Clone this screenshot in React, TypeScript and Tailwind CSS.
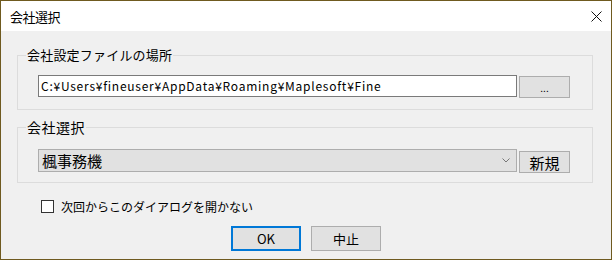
export default function App() {
  return (
    <div className="h-[261px] w-[613px] bg-white">
      <div className="flex h-[260px] w-[612px] flex-col border border-[#6f5a1f] bg-[#f0f0f0] font-['Noto_Sans_CJK_JP',sans-serif] text-black">
        {/* title bar */}
        <div className="flex h-[30px] shrink-0 items-center justify-between bg-white pl-[9px] pr-[9px]">
          <span className="text-[13px] leading-none tracking-[-0.5px]">会社選択</span>
          <svg width="11" height="11" viewBox="0 0 11 11">
            <path d="M0.5 0.5 L10.5 10.5 M10.5 0.5 L0.5 10.5" stroke="#111" strokeWidth="1" />
          </svg>
        </div>

        {/* file location */}
        <fieldset className="ml-4 mt-[15px] w-[576px] border border-[#dcdcdc] pb-[11px] pl-[20px] pt-[11px]">
          <legend className="-ml-[12px] px-[1px] text-[13px] leading-[18px] tracking-[0.2px]">
            会社設定ファイルの場所
          </legend>
          <div className="flex items-start">
            <div className="flex h-[22px] w-[479px] items-center border border-[#7a7a7a] bg-white pl-[2px] text-[12px] tracking-[0.75px]">
              C:¥Users¥fineuser¥AppData¥Roaming¥Maplesoft¥Fine
            </div>
            <button className="ml-[2px] mt-[1px] flex h-[22px] w-[51px] items-end justify-center border border-[#adadad] bg-[#e1e1e1] pb-[4px] text-[10px] leading-none">
              ...
            </button>
          </div>
        </fieldset>

        {/* company select */}
        <fieldset className="ml-4 mt-[8px] w-[576px] border border-[#dcdcdc] pb-[9px] pl-[20px] pt-[13px]">
          <legend className="-ml-[12px] px-[1px] text-[14px] leading-[18px] tracking-[0.5px]">会社選択</legend>
          <div className="flex items-start">
            <div className="flex h-[23px] w-[479px] items-center justify-between border border-[#adadad] bg-[#e1e1e1] pl-[3px] pr-[6px]">
              <span className="text-[15px] leading-none">楓事務機</span>
              <svg width="8" height="5" viewBox="0 0 8 5">
                <path d="M0.5 0.5 L4 4 L7.5 0.5" fill="none" stroke="#777" strokeWidth="1" />
              </svg>
            </div>
            <button className="ml-[2px] mt-[2px] flex h-[22px] w-[51px] items-center justify-center border border-[#adadad] bg-[#e1e1e1] text-[15px] leading-none">
              新規
            </button>
          </div>
        </fieldset>

        {/* checkbox */}
        <label className="ml-[40px] mt-[17px] flex items-center">
          <span className="h-[13px] w-[13px] border border-[#333] bg-white" />
          <span className="ml-[7px] text-[12px] leading-none">次回からこのダイアログを開かない</span>
        </label>

        {/* buttons */}
        <div className="mt-[13px] flex justify-center gap-[10px]">
          <button className="flex h-[25px] w-[70px] items-center justify-center border-2 border-[#0078d7] bg-[#e1e1e1] text-[13px] leading-none">
            OK
          </button>
          <button className="flex h-[25px] w-[70px] items-center justify-center border border-[#adadad] bg-[#e1e1e1] text-[13px] leading-none">
            中止
          </button>
        </div>
      </div>
    </div>
  );
}
